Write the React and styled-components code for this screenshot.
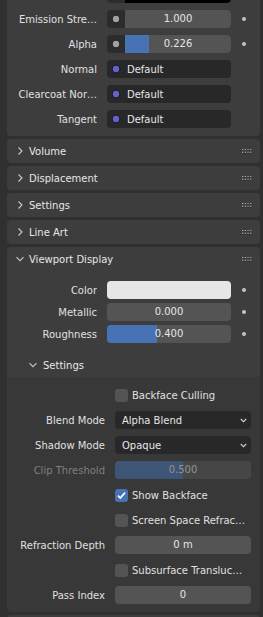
import React from "react"
import styled, { createGlobalStyle } from "styled-components"

const GlobalStyle = createGlobalStyle`
  html, body {
    margin: 0;
    padding: 0;
    background: #303030;
    overflow: hidden;
  }
  body {
    font-family: "DejaVu Sans", "Liberation Sans", sans-serif;
    font-size: 10px;
    color: #e6e6e6;
  }
`

const Region = styled.div`
  width: 263px;
  height: 617px;
  overflow: hidden;
  box-sizing: border-box;
  padding: 0 3px 0 7px;
  display: flex;
  flex-direction: column;
  gap: 3px;
`

const Panel = styled.section`
  flex-shrink: 0;
  background: #3d3d3d;
  border-radius: 4px;
  overflow: hidden;
  margin-top: ${p => p.$shift || 0}px;
`

const PanelHeader = styled.div`
  height: 24px;
  display: flex;
  align-items: center;
  gap: 5px;
  padding: 0 8px 0 9px;
  font-size: 10px;
  color: #e6e6e6;
`

const SubHeader = styled(PanelHeader)`
  padding-left: 22px;
  gap: 6px;
`

const HeaderTitle = styled.span`
  flex: 1;
  white-space: nowrap;
`

const Body = styled.div`
  display: flex;
  flex-direction: column;
  gap: ${p => p.$gap}px;
  padding: ${p => p.$pad};
  background: ${p => p.$bg || "transparent"};
`

const PropRow = styled.div`
  display: grid;
  grid-template-columns: ${p => p.$label}px ${p => p.$field}px 1fr;
  column-gap: 10px;
  align-items: center;
  height: 18px;
`

const Label = styled.span`
  text-align: right;
  white-space: nowrap;
  overflow: hidden;
  color: ${p => (p.$dim ? "#7f7f7f" : "#e0e0e0")};
`

const NumberField = styled.div`
  height: 18px;
  line-height: 18px;
  border-radius: ${p => (p.$joined ? "0 4px 4px 0" : "4px")};
  background: linear-gradient(
    90deg,
    #4772b3 ${p => p.$fill || 0}%,
    #545454 ${p => p.$fill || 0}%
  );
  text-align: center;
  color: #e6e6e6;
  opacity: ${p => (p.$disabled ? 0.5 : 1)};
  flex: 1;
`

const SocketField = styled.div`
  display: flex;
  height: 18px;
  border-radius: 4px;
  overflow: hidden;
`

const SocketPad = styled.div`
  width: 18px;
  flex-shrink: 0;
  display: flex;
  align-items: center;
  justify-content: center;
  background: #2c2c2c;
`

const ColorFill = styled.div`
  flex: 1;
  height: 18px;
  background: ${p => p.$color};
  border-radius: ${p => (p.$joined ? "0 4px 4px 0" : "4px")};
`

const LinkField = styled.div`
  height: 18px;
  display: flex;
  align-items: center;
  gap: 6px;
  padding-left: 4px;
  border-radius: 4px;
  background: #282828;
  color: #e6e6e6;
`

const MenuField = styled.div`
  height: 18px;
  display: flex;
  align-items: center;
  justify-content: space-between;
  padding: 0 4px 0 7px;
  border-radius: 4px;
  background: #282828;
  color: #e6e6e6;
`

const Decorator = styled.span`
  width: 4px;
  height: 4px;
  border-radius: 50%;
  background: #c4c4c4;
  margin-left: 1px;
`

const CheckWrap = styled.div`
  display: flex;
  align-items: center;
  gap: 4px;
  white-space: nowrap;
  overflow: hidden;
  color: #e0e0e0;
`

const Box = styled.span`
  width: 13px;
  height: 13px;
  flex-shrink: 0;
  border-radius: 3px;
  background: ${p => (p.$on ? "#4772b3" : "#545454")};
  display: flex;
  align-items: center;
  justify-content: center;
`

const Svg = styled.svg`
  flex-shrink: 0;
  display: block;
`

const SocketDot = ({ color }) => (
  <Svg width="10" height="10" viewBox="0 0 10 10">
    <circle cx="5" cy="5" r="3.9" fill={color} stroke="#0e0e0e" strokeWidth="0.9" />
  </Svg>
)

const ChevronRight = () => (
  <Svg width="8" height="10" viewBox="0 0 8 10">
    <path d="M2.5 1.5 L6 5 L2.5 8.5" fill="none" stroke="#c8c8c8" strokeWidth="1.1" />
  </Svg>
)

const ChevronDown = () => (
  <Svg width="8" height="8" viewBox="0 0 8 8">
    <path d="M0.5 2.2 L4 5.7 L7.5 2.2" fill="none" stroke="#c8c8c8" strokeWidth="1.1" />
  </Svg>
)

const MenuArrow = () => (
  <Svg width="7" height="5" viewBox="0 0 7 5">
    <path d="M0.8 1 L3.5 3.7 L6.2 1" fill="none" stroke="#d0d0d0" strokeWidth="1.1" />
  </Svg>
)

const Check = () => (
  <Svg width="11" height="11" viewBox="0 0 11 11">
    <path d="M2 5.6 L4.3 8 L9 2.6" fill="none" stroke="#ffffff" strokeWidth="1.6" />
  </Svg>
)

const Grip = () => (
  <Svg width="10" height="5" viewBox="0 0 10 5">
    {[0, 1, 2, 3].map(i =>
      [0, 1].map(j => (
        <g key={i + "-" + j}>
          <rect x={i * 2.7} y={j * 2.7 + 0.6} width="1.3" height="1.3" fill="#1e1e1e" />
          <rect x={i * 2.7} y={j * 2.7} width="1.3" height="1.2" fill="#a8a8a8" />
        </g>
      ))
    )}
  </Svg>
)

const TOP = { label: 90, field: 124 }
const SUB = { label: 98, field: 136 }

const sockets = [
  { label: "Emission Stre…", value: "1.000", fill: 0 },
  { label: "Alpha", value: "0.226", fill: 22.6 },
]
const links = ["Normal", "Clearcoat Nor…", "Tangent"]
const collapsed = ["Volume", "Displacement", "Settings", "Line Art"]

function Row({ cols, label, dim, children, decorated }) {
  return (
    <PropRow $label={cols.label} $field={cols.field}>
      <Label $dim={dim}>{label}</Label>
      {children}
      {decorated ? <Decorator /> : <span />}
    </PropRow>
  )
}

function CheckRow({ label, on }) {
  return (
    <Row cols={SUB} label="">
      <CheckWrap>
        <Box $on={on}>{on && <Check />}</Box>
        {label}
      </CheckWrap>
    </Row>
  )
}

function SurfacePanel() {
  return (
    <Panel $shift={-22}>
      <Body $gap={7} $pad="7px 0 8px 0">
        {/* emission colour row, scrolled mostly out of view */}
        <Row cols={TOP} label="" decorated>
          <SocketField>
            <SocketPad>
              <SocketDot color="#c7c729" />
            </SocketPad>
            <ColorFill $color="#000000" $joined />
          </SocketField>
        </Row>
        {sockets.map(s => (
          <Row key={s.label} cols={TOP} label={s.label} decorated>
            <SocketField>
              <SocketPad>
                <SocketDot color="#a1a1a1" />
              </SocketPad>
              <NumberField $joined $fill={s.fill}>{s.value}</NumberField>
            </SocketField>
          </Row>
        ))}
        {links.map(l => (
          <Row key={l} cols={TOP} label={l}>
            <LinkField>
              <SocketDot color="#6363c7" />
              Default
            </LinkField>
          </Row>
        ))}
      </Body>
    </Panel>
  )
}

function ViewportDisplay() {
  return (
    <Panel>
      <PanelHeader>
        <ChevronDown />
        <HeaderTitle>Viewport Display</HeaderTitle>
        <Grip />
      </PanelHeader>
      <Body $gap={4} $pad="10px 0 10px 0">
        <Row cols={TOP} label="Color" decorated>
          <ColorFill $color="#e6e6e6" />
        </Row>
        <Row cols={TOP} label="Metallic" decorated>
          <NumberField>0.000</NumberField>
        </Row>
        <Row cols={TOP} label="Roughness" decorated>
          <NumberField $fill={40}>0.400</NumberField>
        </Row>
      </Body>
      <SubHeader>
        <ChevronDown />
        <HeaderTitle>Settings</HeaderTitle>
      </SubHeader>
      <Body $gap={7} $pad="9px 0 8px 0" $bg="#383838">
        <CheckRow label="Backface Culling" />
        <Row cols={SUB} label="Blend Mode">
          <MenuField>
            Alpha Blend
            <MenuArrow />
          </MenuField>
        </Row>
        <Row cols={SUB} label="Shadow Mode">
          <MenuField>
            Opaque
            <MenuArrow />
          </MenuField>
        </Row>
        <Row cols={SUB} label="Clip Threshold" dim>
          <NumberField $fill={50} $disabled>0.500</NumberField>
        </Row>
        <CheckRow label="Show Backface" on />
        <CheckRow label="Screen Space Refrac…" />
        <Row cols={SUB} label="Refraction Depth">
          <NumberField>0 m</NumberField>
        </Row>
        <CheckRow label="Subsurface Transluc…" />
        <Row cols={SUB} label="Pass Index">
          <NumberField>0</NumberField>
        </Row>
      </Body>
    </Panel>
  )
}

export default function App() {
  return (
    <>
      <GlobalStyle />
      <Region>
        <SurfacePanel />
        {collapsed.map(name => (
          <Panel key={name}>
            <PanelHeader>
              <ChevronRight />
              <HeaderTitle>{name}</HeaderTitle>
              <Grip />
            </PanelHeader>
          </Panel>
        ))}
        <ViewportDisplay />
        {/* next panel, only its top edge shows */}
        <Panel>
          <PanelHeader />
        </Panel>
      </Region>
    </>
  )
}
